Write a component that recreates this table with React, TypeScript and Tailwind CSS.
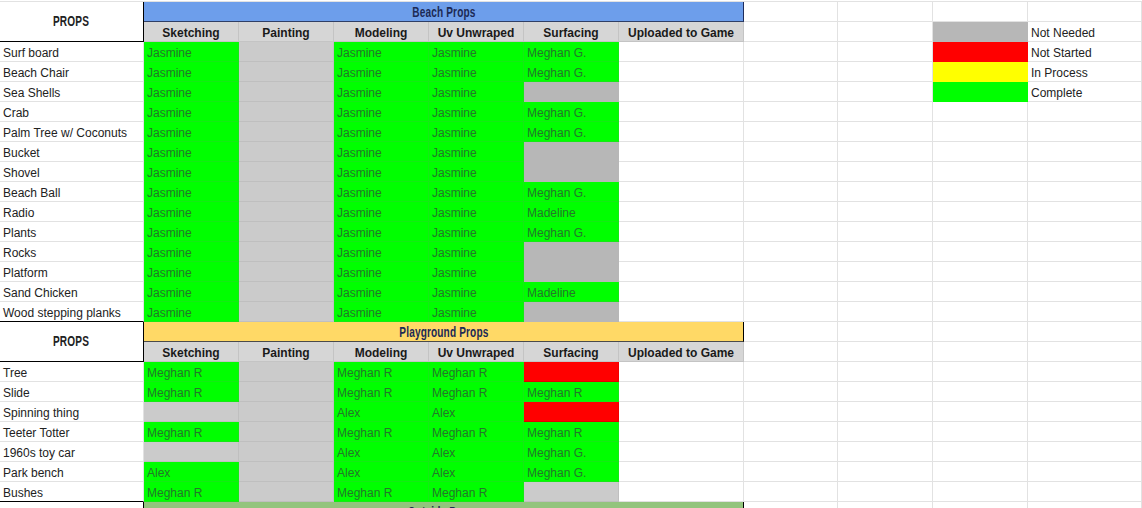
import React from "react";

const beach: [string, string | null, string | null, string | null, string | null, string | null][] = [
  ["Surf board", "Jasmine", null, "Jasmine", "Jasmine", "Meghan G."],
  ["Beach Chair", "Jasmine", null, "Jasmine", "Jasmine", "Meghan G."],
  ["Sea Shells", "Jasmine", null, "Jasmine", "Jasmine", "#dark"],
  ["Crab", "Jasmine", null, "Jasmine", "Jasmine", "Meghan G."],
  ["Palm Tree w/ Coconuts", "Jasmine", null, "Jasmine", "Jasmine", "Meghan G."],
  ["Bucket", "Jasmine", null, "Jasmine", "Jasmine", "#dark"],
  ["Shovel", "Jasmine", null, "Jasmine", "Jasmine", "#dark"],
  ["Beach Ball", "Jasmine", null, "Jasmine", "Jasmine", "Meghan G."],
  ["Radio", "Jasmine", null, "Jasmine", "Jasmine", "Madeline"],
  ["Plants", "Jasmine", null, "Jasmine", "Jasmine", "Meghan G."],
  ["Rocks", "Jasmine", null, "Jasmine", "Jasmine", "#dark"],
  ["Platform", "Jasmine", null, "Jasmine", "Jasmine", "#dark"],
  ["Sand Chicken", "Jasmine", null, "Jasmine", "Jasmine", "Madeline"],
  ["Wood stepping planks", "Jasmine", null, "Jasmine", "Jasmine", "#dark"],
];

const play: [string, string | null, string | null, string | null, string | null, string | null][] = [
  ["Tree", "Meghan R", null, "Meghan R", "Meghan R", "#red"],
  ["Slide", "Meghan R", null, "Meghan R", "Meghan R", "Meghan R"],
  ["Spinning thing", null, null, "Alex", "Alex", "#red"],
  ["Teeter Totter", "Meghan R", null, "Meghan R", "Meghan R", "Meghan R"],
  ["1960s toy car", null, null, "Alex", "Alex", "Meghan G."],
  ["Park bench", "Alex", null, "Alex", "Alex", "Meghan G."],
  ["Bushes", "Meghan R", null, "Meghan R", "Meghan R", null],
];

const headers = ["Sketching", "Painting", "Modeling", "Uv Unwraped", "Surfacing", "Uploaded to Game"];

const base = "box-border h-[20px] border-r border-b flex items-center pt-[2px] overflow-hidden whitespace-nowrap";

function DataCell({ v }: { v: string | null }) {
  if (v === null) {
    return <div className={`${base} bg-[#cbcbcb] border-r-[#bfbfbf] border-b-[#bfbfbf]`} />;
  }
  if (v === "#dark") {
    return <div className={`${base} bg-[#b7b7b7] border-r-[#b7b7b7] border-b-[#b7b7b7]`} />;
  }
  if (v === "#red") {
    return <div className={`${base} bg-[#ff0000] border-r-[#f00000] border-b-[#e00000]`} />;
  }
  return (
    <div className={`${base} bg-[#00ff00] border-r-[#14ea14] border-b-[#14ea14] pl-[3px] text-[#23772a]`}>
      {v}
    </div>
  );
}

function Plain({ children, extra = "" }: { children?: React.ReactNode; extra?: string }) {
  return <div className={`${base} border-r-[#e2e2e2] border-b-[#e2e2e2] bg-white pl-[3px] text-[#222] ${extra}`}>{children}</div>;
}

function Legend({ color, label }: { color: string; label: string }) {
  const cls =
    color === "s"
      ? "bg-[#b7b7b7] border-r-[#b7b7b7] border-b-[#b7b7b7]"
      : color === "r"
      ? "bg-[#ff0000] border-r-[#ff0000] border-b-[#ff0000]"
      : color === "y"
      ? "bg-[#ffff00] border-r-[#ffff00] border-b-[#ffff00]"
      : "bg-[#00ff00] border-r-[#00ff00] border-b-[#00ff00]";
  return (
    <>
      <div className={`${base} ${cls}`} />
      <Plain>{label}</Plain>
    </>
  );
}

function Narrow({ children }: { children: React.ReactNode }) {
  return (
    <span className="inline-block scale-x-[0.72] font-bold text-[14px] tracking-[0.2px]">{children}</span>
  );
}

function PropsCell() {
  return (
    <div className="row-span-2 box-border border-r border-b border-r-black border-b-black bg-white flex items-center justify-center text-[#222]">
      <Narrow>PROPS</Narrow>
    </div>
  );
}

function Band({ title, kind }: { title: string; kind: "blue" | "orange" | "green" }) {
  const cls =
    kind === "blue"
      ? "bg-[#6d9eeb] border-r-[#1f2d5c] border-b-[#2f3f66]"
      : kind === "orange"
      ? "bg-[#ffd966] border-r-black border-b-[#4a4a4a]"
      : "bg-[#93c47d] border-r-black border-b-[#93c47d]";
  return (
    <div
      className={`col-span-6 box-border h-[20px] border-r border-b flex items-center justify-center pt-[1px] text-[#1c2a55] ${cls}`}
    >
      <Narrow>{title}</Narrow>
    </div>
  );
}

function HeaderRow() {
  return (
    <>
      {headers.map((h) => (
        <div
          key={h}
          className={`${base} justify-center bg-[#d6d6d6] border-r-[#c4c4c4] border-b-[#c4c4c4] font-bold text-[#1a1a1a]`}
        >
          {h}
        </div>
      ))}
    </>
  );
}

export default function App() {
  const legend: Record<number, [string, string]> = {
    0: ["r", "Not Started"],
    1: ["y", "In Process"],
    2: ["g", "Complete"],
  };
  return (
    <div
      className="w-[1142px] h-[508px] overflow-hidden bg-white text-[12px]"
      style={{ fontFamily: '"Liberation Sans", Arial, sans-serif' }}
    >
      <div className="h-[2px] box-border border-b border-b-[#e2e2e2]" />
      <div className="grid grid-cols-[144px_95px_95px_95px_95px_95px_125px_94px_95px_95px_1fr] auto-rows-[20px]">
        <PropsCell />
        <Band title="Beach Props" kind="blue" />
        <Plain />
        <Plain />
        <Plain />
        <Plain />
        <HeaderRow />
        <Plain />
        <Plain />
        <Legend color="s" label="Not Needed" />
        {beach.map((r, i) => (
          <React.Fragment key={r[0]}>
            <Plain extra={i === beach.length - 1 ? "!border-b-black" : ""}>{r[0]}</Plain>
            <DataCell v={r[1]} />
            <DataCell v={r[2]} />
            <DataCell v={r[3]} />
            <DataCell v={r[4]} />
            <DataCell v={r[5]} />
            <Plain />
            <Plain />
            <Plain />
            {legend[i] ? (
              <Legend color={legend[i][0]} label={legend[i][1]} />
            ) : (
              <>
                <Plain />
                <Plain />
              </>
            )}
          </React.Fragment>
        ))}
        <PropsCell />
        <Band title="Playground Props" kind="orange" />
        <Plain />
        <Plain />
        <Plain />
        <Plain />
        <HeaderRow />
        <Plain />
        <Plain />
        <Plain />
        <Plain />
        {play.map((r, i) => (
          <React.Fragment key={r[0]}>
            <Plain extra={i === play.length - 1 ? "!border-b-black" : ""}>{r[0]}</Plain>
            <DataCell v={r[1]} />
            <DataCell v={r[2]} />
            <DataCell v={r[3]} />
            <DataCell v={r[4]} />
            <DataCell v={r[5]} />
            <Plain />
            <Plain />
            <Plain />
            <Plain />
            <Plain />
          </React.Fragment>
        ))}
        <Plain extra="!border-r-black" />
        <Band title="Outside Props" kind="green" />
        <Plain />
        <Plain />
        <Plain />
        <Plain />
      </div>
    </div>
  );
}
